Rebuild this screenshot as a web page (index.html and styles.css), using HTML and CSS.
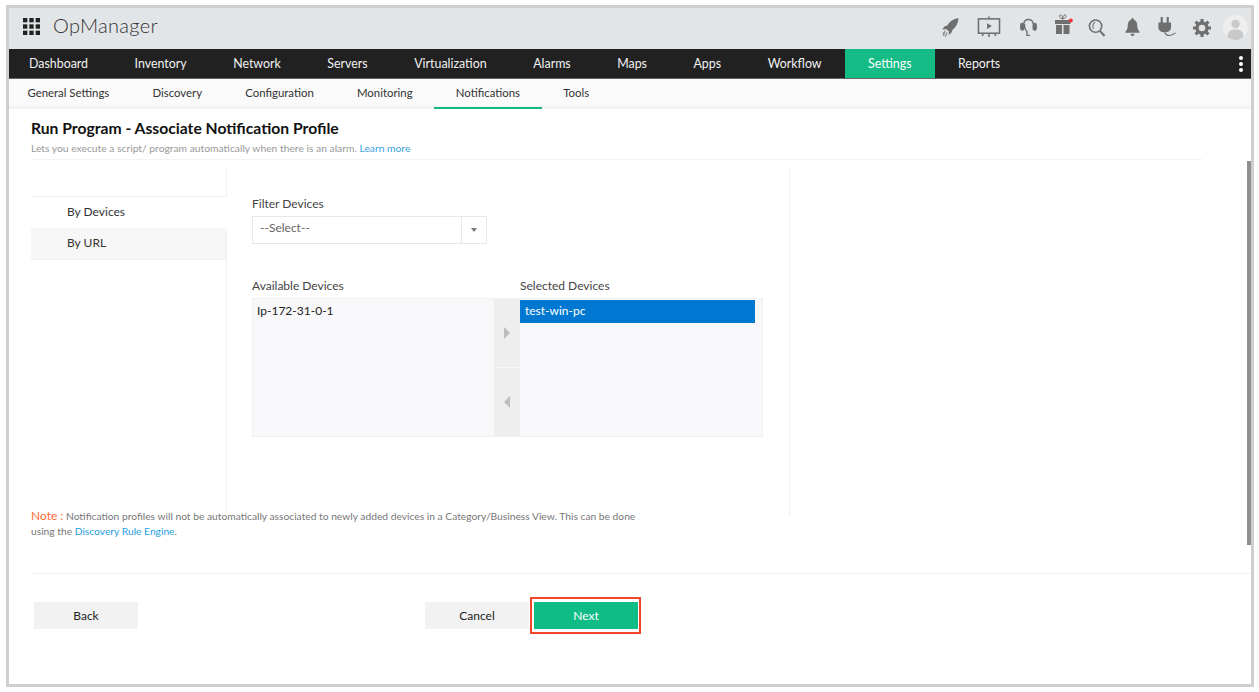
FILE: index.html
```html
<!DOCTYPE html>
<html lang="en">
<head>
  <meta charset="UTF-8">
  <title>OpManager</title>
  <link rel="stylesheet" href="styles.css">
</head>
<body>
  <div id="frame">
    <div class="header">
      <div class="brand">
        <svg class="apps-icon" width="17" height="17" viewBox="0 0 18 18" fill="#222">
          <rect x="0" y="0" width="4.6" height="4.6"/><rect x="6.7" y="0" width="4.6" height="4.6"/><rect x="13.4" y="0" width="4.6" height="4.6"/>
          <rect x="0" y="6.7" width="4.6" height="4.6"/><rect x="6.7" y="6.7" width="4.6" height="4.6"/><rect x="13.4" y="6.7" width="4.6" height="4.6"/>
          <rect x="0" y="13.4" width="4.6" height="4.6"/><rect x="6.7" y="13.4" width="4.6" height="4.6"/><rect x="13.4" y="13.4" width="4.6" height="4.6"/>
        </svg>
        <span class="product">OpManager</span>
      </div>
      <div class="tools">
        <svg class="ic-rocket" width="17" height="19" viewBox="0 0 17 20" fill="#6f6f6f">
          <path d="M17 0 C11 1 7 4 5 8 L2 9 L0 12 L4 11.5 L7 14.5 L6.5 18 L9.5 15.5 L10.5 12.5 C14 10 16.5 6 17 0 Z"/>
          <path d="M3 13 L1 19 M5 15 L3 20 M1.5 15 L0.5 17" stroke="#8a8a8a" stroke-width="1.2" fill="none"/>
        </svg>
        <svg class="ic-screen" width="24" height="22" viewBox="0 0 24 23" fill="none" stroke="#6f6f6f" stroke-width="1.6">
          <rect x="1" y="3" width="22" height="15"/>
          <path d="M12 0.5 V3 M12 18 V22 M6 18 L5 21 M18 18 L19 21"/>
          <path d="M10 7.5 L15 10.5 L10 13.5 Z" fill="#6f6f6f" stroke="none"/>
        </svg>
        <svg class="ic-headset" width="17" height="18" viewBox="0 0 17 18" fill="none" stroke="#6f6f6f" stroke-width="1.4">
          <path d="M3.8 6 C3.8 0 13.2 0 13.2 6"/>
          <path d="M4.5 6 C4.5 9 5 12 7 13.5 V17.5 H10"/>
          <rect x="0.8" y="5.5" width="3" height="6.5" rx="1.5" fill="#6f6f6f"/>
          <rect x="13.2" y="5.5" width="3" height="6.5" rx="1.5" fill="#6f6f6f"/>
        </svg>
        <svg class="ic-gift" width="19" height="20" viewBox="0 0 19 20" fill="#6f6f6f">
          <rect x="1" y="6" width="15.5" height="4"/>
          <rect x="2" y="11" width="6" height="9"/>
          <rect x="9.5" y="11" width="6" height="9"/>
          <path d="M8.7 5 C5.5 4 4.5 2 6 1 C7.5 0.2 8.5 2.5 8.7 5 C9 2.5 10 0.2 11.5 1 C13 2 12 4 8.7 5" stroke="#6f6f6f" stroke-width="1" fill="none"/>
          <circle cx="16.8" cy="6.5" r="2" fill="#f3303a"/>
        </svg>
        <svg class="ic-search" width="18" height="18" viewBox="0 0 18 19" fill="none" stroke="#6f6f6f" stroke-width="1.7">
          <circle cx="7.5" cy="7.5" r="6.5"/>
          <path d="M12 12.5 L17 18" stroke-width="2.2"/>
          <path d="M7 3.5 C4.5 4.5 4 8 5.5 10.5" stroke-width="1.1"/>
        </svg>
        <svg class="ic-bell" width="15" height="18" viewBox="0 0 15 19" fill="#6f6f6f">
          <path d="M7.5 0 C8.5 0 9 0.8 9 1.8 C11.5 2.6 12.5 5 12.5 8 C12.5 11 13.5 13 15 14.5 V15.5 H0 V14.5 C1.5 13 2.5 11 2.5 8 C2.5 5 3.5 2.6 6 1.8 C6 0.8 6.5 0 7.5 0 Z"/>
          <path d="M5.5 16.5 H9.5 C9.5 18 8.6 19 7.5 19 C6.4 19 5.5 18 5.5 16.5 Z"/>
        </svg>
        <svg class="ic-plug" width="20" height="20" viewBox="0 0 20 22" fill="#6f6f6f">
          <rect x="3" y="0" width="2.4" height="7"/>
          <rect x="9.6" y="0" width="2.4" height="7"/>
          <path d="M0.5 6 H14.5 V11 C14.5 15 11.5 17 7.5 17 C3.5 17 0.5 15 0.5 11 Z"/>
          <path d="M7.5 17 C9 21 14 21.5 19.5 17.5" stroke="#6f6f6f" stroke-width="1.2" fill="none"/>
        </svg>
        <svg class="ic-gear" width="18" height="18" viewBox="0 0 18 18" fill="none" stroke="#6f6f6f">
          <circle cx="9" cy="9" r="5" stroke-width="3.4"/>
          <path d="M9 0 V3 M9 15 V18 M0 9 H3 M15 9 H18 M2.6 2.6 L4.8 4.8 M13.2 13.2 L15.4 15.4 M2.6 15.4 L4.8 13.2 M13.2 4.8 L15.4 2.6" stroke-width="3.2"/>
        </svg>
        <svg class="ic-user" width="25" height="25" viewBox="0 0 25 25">
          <circle cx="12.5" cy="12.5" r="12.5" fill="#eeeeee"/>
          <circle cx="12.5" cy="9" r="4.2" fill="#c9c9c9"/>
          <path d="M4.5 22 C4.5 16 8 14.5 12.5 14.5 C17 14.5 20.5 16 20.5 22 C18 24 15.5 25 12.5 25 C9.5 25 7 24 4.5 22 Z" fill="#c9c9c9"/>
        </svg>
      </div>
    </div>

    <div class="nav">
      <a class="nav-item first">Dashboard</a>
      <a class="nav-item">Inventory</a>
      <a class="nav-item">Network</a>
      <a class="nav-item">Servers</a>
      <a class="nav-item">Virtualization</a>
      <a class="nav-item">Alarms</a>
      <a class="nav-item">Maps</a>
      <a class="nav-item">Apps</a>
      <a class="nav-item">Workflow</a>
      <a class="nav-item active">Settings</a>
      <a class="nav-item">Reports</a>
      <div class="nav-more"><i></i><i></i><i></i></div>
    </div>

    <div class="subnav">
      <a class="sub-item">General Settings</a>
      <a class="sub-item">Discovery</a>
      <a class="sub-item">Configuration</a>
      <a class="sub-item">Monitoring</a>
      <a class="sub-item active">Notifications</a>
      <a class="sub-item">Tools</a>
    </div>

    <div class="content">
      <div class="page-head">
        <h1>Run Program - Associate Notification Profile</h1>
        <p>Lets you execute a script/ program automatically when there is an alarm. <a class="learn">Learn more</a></p>
      </div>

      <div class="columns">
        <div class="side">
          <div class="side-tab selected">By Devices</div>
          <div class="side-tab">By URL</div>
        </div>
        <div class="middle">
          <label class="field-label">Filter Devices</label>
          <div class="select">
            <span class="select-text">--Select--</span>
            <span class="select-arrow"><i></i></span>
          </div>
          <div class="list-labels">
            <label class="field-label">Available Devices</label>
            <label class="field-label">Selected Devices</label>
          </div>
          <div class="picker">
            <div class="list-left">Ip-172-31-0-1</div>
            <div class="movers">
              <div class="mover"><i class="arrow-right"></i></div>
              <div class="mover"><i class="arrow-left"></i></div>
            </div>
            <div class="list-right">
              <div class="option">test-win-pc</div>
            </div>
          </div>
        </div>
      </div>

      <div class="note">
        <span class="note-tag">Note :</span> Notification profiles will not be automatically associated to newly added devices in a Category/Business View. This can be done<br>using the <a class="rule-link">Discovery Rule Engine</a>.
      </div>

      <div class="actions">
        <button class="btn">Back</button>
        <div class="actions-right">
          <button class="btn">Cancel</button>
          <div class="highlight"><button class="btn primary">Next</button></div>
        </div>
      </div>
    </div>

    <div class="scrollbar"></div>
  </div>
</body>
</html>
```

FILE: styles.css
```css
* {
  box-sizing: border-box;
}

body {
  margin: 0;
  font-family: Lato, "Open Sans", sans-serif;
  background: #fff;
  color: #333;
}

#frame {
  position: relative;
  width: 1248px;
  height: 682px;
  margin: 5px 0 0 6px;
  border: 3px solid #cfcfcf;
  overflow: hidden;
}

.header {
  height: 41px;
  background: #e2e5e7;
  display: flex;
  align-items: flex-start;
  justify-content: space-between;
}

.brand {
  display: flex;
  align-items: center;
  padding: 5px 0 0 14px;
}

.apps-icon {
  margin-top: 3px;
}

.product {
  margin-left: 13px;
  font-size: 20px;
  font-weight: 300;
  letter-spacing: 0.3px;
  color: #333;
}

.tools {
  display: flex;
  align-items: flex-start;
  padding-right: 3px;
}

.tools svg {
  flex: none;
}

.tools .ic-rocket {
  margin-top: 10px;
}

.tools .ic-screen {
  margin: 8px 0 0 18px;
}

.tools .ic-headset {
  margin: 10px 0 0 19px;
}

.tools .ic-gift {
  margin: 6px 0 0 17px;
}

.tools .ic-search {
  margin: 11px 0 0 15px;
}

.tools .ic-bell {
  margin: 10px 0 0 19px;
}

.tools .ic-plug {
  margin: 9px 0 0 17px;
}

.tools .ic-gear {
  margin: 11px 0 0 16px;
}

.tools .ic-user {
  margin: 7px 0 0 12px;
}

.nav {
  height: 30px;
  background: #212121;
  display: flex;
  align-items: stretch;
  position: relative;
  border-bottom: 1px solid #666;
}

.nav-item {
  display: flex;
  align-items: center;
  padding: 0 23.25px 1px;
  font-size: 12.4px;
  color: #f2f2f2;
}

.nav-item.first {
  margin-left: -3.25px;
}

.nav-item.active {
  background: #14bb85;
  color: #fff;
}

.nav-more {
  margin-left: auto;
  margin-right: 8px;
  display: flex;
  flex-direction: column;
  justify-content: center;
  gap: 2px;
}

.nav-more i {
  display: block;
  width: 4px;
  height: 4px;
  border-radius: 50%;
  background: #fff;
}

.subnav {
  height: 30px;
  background: #fafafa;
  border-bottom: 3px solid #f3f3f3;
  display: flex;
}

.sub-item {
  height: 30px;
  display: flex;
  align-items: center;
  padding: 0 21.6px 4px;
  font-size: 11.4px;
  color: #333;
}

.sub-item:first-child {
  margin-left: -3.2px;
}

.sub-item.active {
  border-bottom: 2px solid #14bb85;
  padding-bottom: 2px;
}

.content {
  padding: 0 0 0 22px;
}

.page-head {
  width: 1171px;
  height: 51px;
  border-bottom: 1px solid #f2f2f2;
  padding-top: 10px;
}

.page-head h1 {
  margin: 0;
  font-size: 15.7px;
  line-height: 19px;
  font-weight: 700;
  color: #111;
}

.page-head p {
  margin: 4px 0 0;
  font-size: 10.3px;
  line-height: 13px;
  color: #999;
}

.learn {
  color: #3aa3dc;
}

.columns {
  display: flex;
  align-items: flex-start;
  margin-top: 10px;
  height: 346px;
}

.side {
  width: 196px;
  height: 340px;
  border-right: 1px solid #f0f0f0;
  padding-top: 26px;
}

.side-tab {
  height: 32px;
  padding: 0 0 2px 36px;
  display: flex;
  align-items: center;
  font-size: 12px;
  color: #333;
  background: #f7f7f7;
  border-bottom: 1px solid #f0f0f0;
}

.side-tab.selected {
  background: #fff;
  border-top: 1px solid #f0f0f0;
  border-bottom: none;
  margin-right: -1px;
}

.middle {
  width: 563px;
  height: 346px;
  border-right: 1px solid #f0f0f0;
  padding: 26px 0 0 25px;
}

.field-label {
  display: block;
  font-size: 12px;
  line-height: 15px;
  color: #444;
}

.select {
  width: 235px;
  height: 28px;
  margin-top: 5px;
  border: 1px solid #e8e8e8;
  display: flex;
  align-items: center;
  justify-content: space-between;
}

.select-text {
  padding: 0 0 6px 7px;
  font-size: 12px;
  color: #666;
}

.select-arrow {
  width: 25px;
  height: 100%;
  border-left: 1px solid #e8e8e8;
  display: flex;
  align-items: center;
  justify-content: center;
}

.select-arrow i {
  border-left: 3px solid transparent;
  border-right: 3px solid transparent;
  border-top: 4px solid #777;
}

.list-labels {
  display: flex;
  margin-top: 34px;
}

.list-labels .field-label {
  width: 268px;
}

.picker {
  width: 511px;
  height: 139px;
  margin-top: 5px;
  background: #f8f8fa;
  border: 1px solid #f0f0f0;
  display: flex;
}

.list-left {
  width: 241px;
  padding: 4px 0 0 4px;
  font-size: 12px;
  line-height: 16px;
  color: #222;
}

.movers {
  width: 26px;
  display: flex;
  flex-direction: column;
  gap: 1px;
}

.mover {
  flex: 1;
  background: #eeeeee;
  display: flex;
  align-items: center;
  justify-content: center;
}

.arrow-right {
  border-top: 6px solid transparent;
  border-bottom: 6px solid transparent;
  border-left: 6px solid #bdbdbd;
  margin-bottom: 1px;
}

.arrow-left {
  border-top: 6px solid transparent;
  border-bottom: 6px solid transparent;
  border-right: 6px solid #bdbdbd;
}

.list-right {
  flex: 1;
  padding: 1px 7px 0 0;
}

.option {
  height: 23px;
  background: #0078d2;
  color: #fff;
  font-size: 12px;
  line-height: 21px;
  padding-left: 5px;
}

.note {
  margin-top: -8px;
  position: relative;
  font-size: 10.25px;
  line-height: 15px;
  color: #777;
}

.note-tag {
  font-size: 12px;
  color: #ff6a33;
}

.rule-link {
  color: #1e9ee0;
}

.actions {
  margin-top: 34px;
  width: 1220px;
  border-top: 1px solid #f2f2f2;
  padding: 28px 0 0 3px;
  display: flex;
  align-items: flex-start;
}

.actions-right {
  margin-left: 287px;
  display: flex;
  align-items: flex-start;
}

.btn {
  width: 104px;
  height: 27px;
  border: none;
  background: #f2f2f2;
  font-family: inherit;
  font-size: 12px;
  color: #222;
}

.btn.primary {
  background: #10bc85;
  color: #fff;
  display: block;
}

.highlight {
  margin: -5px 0 0 1px;
  padding: 3px 1px 3px 2px;
  border: 2px solid #f2462b;
}

.scrollbar {
  position: absolute;
  top: 153px;
  right: 0;
  width: 4px;
  height: 384px;
  background: #8f8f8f;
}
```
